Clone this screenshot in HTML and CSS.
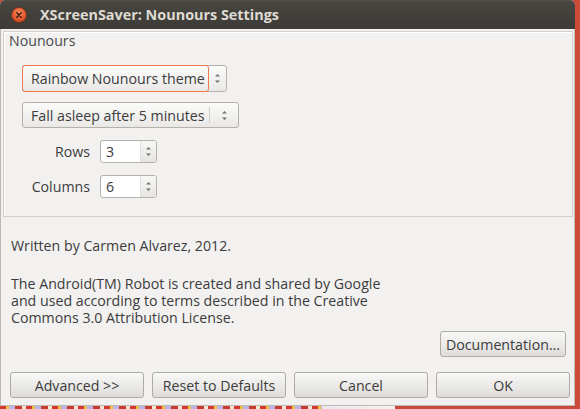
FILE: index.html
```html
<!DOCTYPE html>
<html>
<head>
<meta charset="utf-8">
<link rel="stylesheet" href="styles.css">
</head>
<body>
<div class="window">
  <div class="titlebar">
    <span class="close">
      <svg width="16" height="16" viewBox="0 0 16 16"><defs><radialGradient id="cg" cx="0.5" cy="0.35" r="0.7"><stop offset="0" stop-color="#f58a5a"/><stop offset="0.6" stop-color="#e45b2f"/><stop offset="1" stop-color="#c4401e"/></radialGradient></defs><circle cx="8" cy="8" r="7.5" fill="url(#cg)" stroke="#6e2a14" stroke-width="0.6"/><path d="M5.8 5.8 L10.2 10.2 M10.2 5.8 L5.8 10.2" stroke="#3a1a10" stroke-width="1.4" stroke-linecap="round"/></svg>
    </span>
    <span class="title">XScreenSaver: Nounours Settings</span>
  </div>
  <div class="content">
    <div class="frame">
      <div class="frame-label">Nounours</div>
      <div class="frame-body">
        <div class="combo combo-focus">
          <span class="combo-main">Rainbow Nounours theme</span>
          <span class="combo-arrows">
            <svg width="7" height="11" viewBox="0 0 7 11"><path d="M3.5 1 L6 3.5 L1 3.5 Z M1 7.5 L6 7.5 L3.5 10 Z" fill="#707070"/></svg>
          </span>
        </div>
        <div class="combo combo-plain">
          <span class="combo-main">Fall asleep after 5 minutes</span>
          <span class="combo-sep"></span>
          <span class="combo-arrows">
            <svg width="7" height="11" viewBox="0 0 7 11"><path d="M3.5 1 L6 3.5 L1 3.5 Z M1 7.5 L6 7.5 L3.5 10 Z" fill="#707070"/></svg>
          </span>
        </div>
        <div class="spins">
          <span class="spin-label">Rows</span>
          <div class="spin"><span class="spin-value">3</span><span class="spin-btns"><svg width="7" height="13" viewBox="0 0 7 13"><path d="M3.5 2 L6 4.5 L1 4.5 Z M1 8.5 L6 8.5 L3.5 11 Z" fill="#707070"/></svg></span></div>
          <span class="spin-label">Columns</span>
          <div class="spin"><span class="spin-value">6</span><span class="spin-btns"><svg width="7" height="13" viewBox="0 0 7 13"><path d="M3.5 2 L6 4.5 L1 4.5 Z M1 8.5 L6 8.5 L3.5 11 Z" fill="#707070"/></svg></span></div>
        </div>
      </div>
    </div>
    <p class="written">Written by Carmen Alvarez, 2012.</p>
    <p class="license">The Android(TM) Robot is created and shared by Google<br>and used according to terms described in the Creative<br>Commons 3.0 Attribution License.</p>
    <div class="doc-row"><button class="btn doc">Documentation...</button></div>
    <div class="btn-row">
      <button class="btn">Advanced &gt;&gt;</button>
      <button class="btn">Reset to Defaults</button>
      <button class="btn">Cancel</button>
      <button class="btn">OK</button>
    </div>
  </div>
</div>
<div class="desktop-strip"></div>
</body>
</html>
```

FILE: styles.css
```css
html, body {
  margin: 0;
  padding: 0;
}
body {
  width: 580px;
  height: 409px;
  overflow: hidden;
  background: #cf4b39;
  font-family: "Open Sans", "DejaVu Sans", sans-serif;
  font-size: 14.2px;
  color: #3c3c3c;
}
.window {
  width: 575px;
  height: 406px;
  display: flex;
  flex-direction: column;
  border-radius: 5px 5px 0 0;
  overflow: hidden;
  background: #f2f1f0;
}
.titlebar {
  height: 29px;
  flex: none;
  display: flex;
  align-items: center;
  background: linear-gradient(#5a5852 0, #4a4843 1px, #45433e 8px, #3c3b37 29px);
  color: #dfdbd2;
}
.close {
  display: flex;
  margin-left: 11px;
  margin-top: 1px;
}
.title {
  margin-left: 13px;
  font-weight: bold;
  font-size: 14.4px;
}
.content {
  flex: 1;
  display: flex;
  flex-direction: column;
  border-left: 1px solid #bdbab5;
  border-right: 1px solid #bdbab5;
  border-bottom: 1px solid #bdbab5;
  padding: 2px 1px 0 2px;
}
.frame {
  height: 186px;
  box-sizing: border-box;
  border: 1px solid #d3d0cb;
  box-shadow: inset 1px 1px 0 #ffffff;
  padding: 0 5px 0;
}
.frame-label {
  line-height: 17px;
  color: #4a4a4a;
}
.frame-body {
  padding-left: 13px;
  padding-top: 16px;
  display: flex;
  flex-direction: column;
  align-items: flex-start;
}
.combo {
  display: flex;
  align-items: stretch;
  box-sizing: border-box;
  border: 1px solid #b4b1ac;
  border-radius: 3px;
  background: linear-gradient(#fbfbfa, #e9e8e6);
  white-space: nowrap;
}
.combo-focus {
  height: 27px;
  width: 205px;
}
.combo-focus .combo-main {
  border: 1px solid #ee7a4d;
  border-radius: 3px;
  margin: -1px 0 -1px -1px;
  width: 187px;
  box-sizing: border-box;
  padding-left: 8px;
  display: flex;
  align-items: center;
}
.combo-focus .combo-arrows {
  flex: 1;
  display: flex;
  align-items: center;
  justify-content: center;
}
.combo-plain {
  height: 26px;
  width: 217px;
  margin-top: 10px;
}
.combo-plain .combo-main {
  padding-left: 8px;
  width: 186px;
  box-sizing: border-box;
  display: flex;
  align-items: center;
}
.combo-sep {
  width: 1px;
  margin: 4px 0;
  background: #cfcdc9;
}
.combo-plain .combo-arrows {
  flex: 1;
  display: flex;
  align-items: center;
  justify-content: center;
}
.spins {
  display: grid;
  grid-template-columns: 68px 57px;
  column-gap: 10px;
  row-gap: 12px;
  margin-top: 12px;
  align-items: center;
}
.spin-label {
  justify-self: end;
  line-height: 17px;
}
.spin {
  height: 23px;
  box-sizing: border-box;
  display: flex;
  border: 1px solid #b4b1ac;
  border-radius: 3px;
  background: #ffffff;
  overflow: hidden;
}
.spin-value {
  flex: 1;
  padding-left: 5px;
  display: flex;
  align-items: center;
}
.spin-btns {
  width: 15px;
  display: flex;
  align-items: center;
  justify-content: center;
  border-left: 1px solid #e2e0dd;
  background: linear-gradient(#f7f7f6, #e6e5e2);
}
.written {
  margin: 20px 0 0 8px;
  line-height: 17px;
}
.license {
  margin: 21px 0 0 8px;
  line-height: 17px;
}
.doc-row {
  display: flex;
  justify-content: flex-end;
  margin-top: 5px;
  padding-right: 7px;
}
.btn {
  font-family: inherit;
  font-size: 14.2px;
  color: #3c3c3c;
  height: 26px;
  box-sizing: border-box;
  border: 1px solid #aeaba7;
  border-radius: 3px;
  background: linear-gradient(#f8f8f7, #e9e8e6 60%, #dddcd9);
  padding: 0;
  margin: 0;
  white-space: nowrap;
}
.doc {
  width: 126px;
}
.btn-row {
  display: grid;
  grid-template-columns: repeat(4, 134px);
  column-gap: 8px;
  margin-top: 15px;
  padding-left: 7px;
}
.desktop-strip {
  height: 3px;
  background:
    linear-gradient(90deg, transparent 0, transparent 322px, #e9e6ee 322px, #f5f3f0 395px, #cc4a3c 395px),
    repeating-linear-gradient(90deg, #d9372c 0, #d9372c 6px, #e9c23e 6px, #e9c23e 9px, #b9b5ea 9px, #b9b5ea 15px, #c83b2f 15px, #c83b2f 22px, #f0e6d2 22px, #f0e6d2 26px);
}
```
